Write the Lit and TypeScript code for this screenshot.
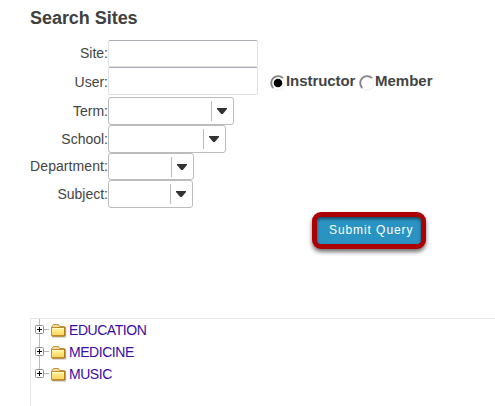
import { LitElement, html, css, svg } from "lit";
import { customElement, property } from "lit/decorators.js";

@customElement("select-box")
class SelectBox extends LitElement {
  @property({ type: Number }) width = 100;
  @property({ type: Number }) height = 28;
  static styles = css`
    .box { box-sizing: border-box; border: 1px solid #bcbcbc; border-radius: 3px; background: #fff;
      display: flex; justify-content: flex-end; padding-top: 3px; }
    .arrow { box-sizing: border-box; width: 22px; height: 20px; border-left: 1px solid #bcbcbc; padding: 7px 0 0 5px; }
    svg { display: block; }
  `;
  render() {
    return html`<div class="box" style="width:${this.width}px;height:${this.height}px">
      <div class="arrow"><svg width="10" height="6" viewBox="0 0 10 6"><path d="M0 0H10V1L5.8 6H4.2L0 1Z" fill="#333" /></svg></div>
    </div>`;
  }
}

@customElement("tree-node")
class TreeNode extends LitElement {
  @property() label = "";
  @property({ type: Boolean }) last = false;
  static styles = css`
    :host { display: flex; height: 22px; }
    svg { display: block; flex: none; }
    .label { font-size: 14px; line-height: 22px; letter-spacing: -0.45px; color: #3a0ca8; white-space: nowrap; margin-left: 2px; }
  `;
  render() {
    return html`<svg width="36" height="22" viewBox="0 0 36 22">
        <defs>
          <linearGradient id="f" x1="0" y1="0" x2="0" y2="1"><stop offset="0" stop-color="#fff8a0" /><stop offset="1" stop-color="#fbd05a" /></linearGradient>
        </defs>
        <path d=${this.last ? "M8.5 0V6" : "M8.5 0V6M8.5 15V22"} stroke="#bcbcc0" stroke-width="1" />
        <path d="M13 10.5H18" stroke="#b8b8b8" />
        <rect x="4.5" y="6.5" width="8" height="8" rx="1" fill="#fff" stroke="#909090" />
        <path d="M6 10.5H11M8.5 8V13" stroke="#000" />
        <path d="M21.5 18.2H34.8V8" fill="none" stroke="#777" stroke-opacity=".4" />
        <path d="M20.5 9.5V8L22.5 5.5H27.5L28.5 7.5H33.5V9.5Z" fill="#f3dda0" stroke="#c09040" />
        <rect x="20.5" y="8.5" width="13" height="8.5" rx=".6" fill="url(#f)" stroke="#c08a28" />
        <path d="M21 9.5H33" stroke="#fffcc8" />
        <path d="M21 17H34V8" fill="none" stroke="#a46d16" />
      </svg><span class="label">${this.label}</span>`;
  }
}

@customElement("app-root")
class AppRoot extends LitElement {
  static styles = css`
    :host { display: block; height: 406px; overflow: hidden; background: #fff; color: #444;
      font-family: "Liberation Sans", Arial, sans-serif; font-size: 14px; }
    h1 { margin: 0; padding: 7px 0 0 30px; height: 33px; box-sizing: content-box; font-size: 18px; line-height: 22px; font-weight: bold; letter-spacing: -0.04px; color: #404040; }
    .row { display: flex; height: 28px; }
    .site { height: 27px; }
    .user { height: 30px; }
    .department { height: 27px; }
    .name { width: 108px; text-align: right; line-height: 28px; flex: none; }
    .site .name, .department .name { line-height: 27px; }
    .department .name { letter-spacing: 0.08px; }
    .user .name { line-height: 30px; }
    .input { box-sizing: border-box; width: 150px; height: 28px; border: 1px solid #dfdfe6; border-top-color: #abadb3; border-radius: 2px; }
    .site .input { height: 27px; }
    .radio { display: flex; align-items: flex-start; font-weight: bold; font-size: 15px; line-height: 28px; height: 28px; }
    .radio svg { margin-top: 8px; flex: none; }
    .first { margin-left: 12px; width: 89px; letter-spacing: -0.07px; }
    .actions { height: 110px; padding: 4px 0 0 312px; box-sizing: border-box; }
    .submit { box-sizing: border-box; width: 114px; height: 37px; border: 5px solid #ab0004; border-radius: 9px;
      background: #2a93c2; color: #fff; font-size: 12px; letter-spacing: 0.92px; line-height: 26px;
      padding: 0 0 0 12px; white-space: nowrap; display: flex;
      box-shadow: 0 3px 4px rgba(0,0,0,.55), inset 0 2px 3px rgba(0,0,0,.5); }
    .tree { margin-left: 30px; height: 88px; box-sizing: border-box; border: solid #e6e6e6; border-width: 1px 0 0 1px; }
  `;
  radio(label: string, on: boolean) {
    return html`<div class="radio ${on ? "first" : ""}"><svg width="16" height="16" viewBox="0 0 16 16">
      <path d="M3.2 13A6.7 6.7 0 1 1 13 3.2" fill="none" stroke="#858585" stroke-width="1.9" />
      <path d="M13 3.2A6.7 6.7 0 0 1 3.2 13" fill="none" stroke="#f1f1f1" stroke-width="1.3" />
      ${on ? svg`<circle cx="8" cy="8" r="4.3" fill="#000" />` : ""}
    </svg><span>${label}</span></div>`;
  }
  render() {
    return html`
      <h1>Search Sites</h1>
      <div class="row site"><span class="name">Site:</span><div class="input"></div></div>
      <div class="row user"><span class="name">User:</span><div class="input"></div>
        ${this.radio("Instructor", true)}${this.radio("Member", false)}</div>
      <div class="row"><span class="name">Term:</span><select-box width="126"></select-box></div>
      <div class="row"><span class="name">School:</span><select-box width="118"></select-box></div>
      <div class="row department"><span class="name">Department:</span><select-box width="86" height="27"></select-box></div>
      <div class="row"><span class="name">Subject:</span><select-box width="85"></select-box></div>
      <div class="actions"><div class="submit">Submit Query</div></div>
      <div class="tree">
        ${["EDUCATION", "MEDICINE", "MUSIC"].map((n, i) => html`<tree-node label=${n} ?last=${i === 2}></tree-node>`)}
      </div>
    `;
  }
}
